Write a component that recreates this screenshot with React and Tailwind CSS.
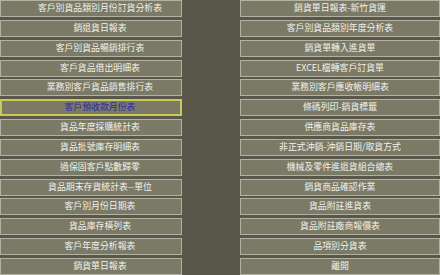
import React from 'react';

// Report menu: two columns of flat olive buttons
const LEFT = [
  '客戶別貨品類別月份訂貨分析表',
  '銷退貨日報表',
  '客戶別貨品暢銷排行表',
  '客戶貨品借出明細表',
  '業務別客戶貨品銷售排行表',
  '客戶預收款月份表',
  '貨品年度採購統計表',
  '貨品批號庫存明細表',
  '過保固客戶點數歸零',
  '貨品期末存貨統計表--單位',
  '客戶別月份日期表',
  '貨品庫存橫列表',
  '客戶年度分析報表',
  '銷貨單日報表',
];

const RIGHT = [
  '銷貨單日報表-新竹貨運',
  '客戶別貨品類別年度分析表',
  '銷貨單轉入進貨單',
  'EXCEL檔轉客戶訂貨單',
  '業務別客戶應收帳明細表',
  '條碼列印-銷貨標籤',
  '供應商貨品庫存表',
  '非正式沖銷-沖銷日期/取貨方式',
  '機械及零件進退貨組合總表',
  '銷貨商品確認作業',
  '貨品附註進貨表',
  '貨品附註廠商報價表',
  '品項別分貨表',
  '離開',
];

const MenuButton = ({ label, active, shift }) => (
  <div
    className={`flex items-center justify-center bg-[#7b7a67] border ${
      active ? 'border-[#c9c85a] border-2' : 'border-[#b3b2a2]'
    }`}
  >
    <span
      className={`${shift} text-[8.9px] leading-none whitespace-nowrap ${
        active ? 'text-[#2a2aa8]' : 'text-[#f2f2ec]'
      }`}
    >
      {label}
    </span>
  </div>
);

const App = () => {
  return (
    <div
      className="w-[440px] h-[275px] overflow-hidden bg-[#58574a] flex"
      style={{ fontFamily: '"Noto Sans CJK TC", "Noto Sans CJK SC", sans-serif' }}
    >
      <div className="w-[191px] h-full grid grid-rows-14 gap-[2.8px]">
        {LEFT.map((t, i) => (
          <MenuButton key={t} label={t} active={i === 5} shift="pl-[18px]" />
        ))}
      </div>
      <div className="ml-[58px] w-[200px] shrink-0 h-full grid grid-rows-14 gap-[2.8px]">
        {RIGHT.map((t) => (
          <MenuButton key={t} label={t} shift="pl-0" />
        ))}
      </div>
    </div>
  );
};

export default App;
